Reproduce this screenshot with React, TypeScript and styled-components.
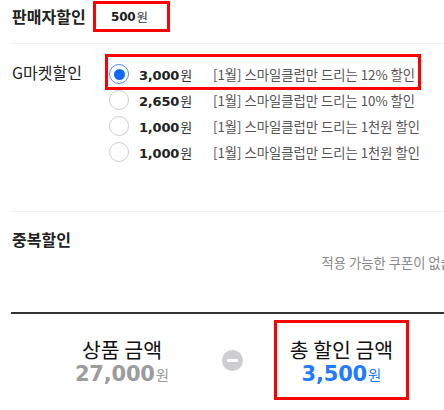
import React from "react";
import styled, { createGlobalStyle } from "styled-components";

const Global = createGlobalStyle`
  html, body { margin: 0; padding: 0; background: #fff; overflow: hidden; }
  body { width: 444px; height: 410px; }
`;

const KR = `"Noto Sans CJK KR", "Noto Sans", sans-serif`;
const NUM = `"DejaVu Sans", "Noto Sans CJK KR", sans-serif`;

const Page = styled.div`
  margin-left: 11px;
  width: 470px;
  font-family: ${KR};
  color: #222;
`;

const Section = styled.section<{ $pt: number; $h: number; $line?: boolean }>`
  height: ${(p) => p.$h}px;
  box-sizing: border-box;
  padding-top: ${(p) => p.$pt}px;
  border-bottom: ${(p) => (p.$line ? "1px solid #ececec" : "none")};
`;

const SellerRow = styled.div`
  height: 44px;
  box-sizing: border-box;
  padding-top: 1px;
  display: flex;
  align-items: flex-start;
  border-bottom: 1px solid #ececec;
`;

const Label = styled.div<{ $w: number; $lh: number; $bold?: boolean }>`
  width: ${(p) => p.$w}px;
  flex: none;
  padding-left: 1px;
  box-sizing: border-box;
  font-size: 16px;
  line-height: ${(p) => p.$lh}px;
  font-weight: ${(p) => (p.$bold ? 700 : 400)};
  color: #222;
  white-space: nowrap;
`;

const SellerValue = styled.div`
  width: 77px;
  height: 31px;
  box-sizing: border-box;
  border: 3px solid #f00;
  padding-left: 15px;
  display: flex;
  align-items: center;
`;

const Amount = styled.span<{ $size: number; $color: string }>`
  font-family: ${NUM};
  font-weight: 700;
  font-size: ${(p) => p.$size}px;
  color: ${(p) => p.$color};
  letter-spacing: -0.2px;
`;

const Won = styled.span<{ $size: number; $color: string }>`
  font-family: ${KR};
  font-weight: 400;
  font-size: ${(p) => p.$size}px;
  color: ${(p) => p.$color};
  margin-left: 1px;
`;

const GmarketBody = styled.div`
  display: flex;
  align-items: flex-start;
`;

const OptionList = styled.div`
  display: flex;
  flex-direction: column;
  margin-left: 3px;
`;

const OptionRow = styled.label<{ $hl?: boolean }>`
  position: relative;
  height: 26px;
  display: flex;
  align-items: center;
  cursor: pointer;
  ${(p) =>
    p.$hl
      ? `&::after {
    content: "";
    position: absolute;
    left: -4px;
    top: -7px;
    bottom: -3px;
    width: 316px;
    box-sizing: border-box;
    border: 3px solid #f00;
    pointer-events: none;
  }`
      : ""}
`;

const Radio = styled.span<{ $on?: boolean }>`
  width: 20px;
  height: 20px;
  box-sizing: border-box;
  border-radius: 50%;
  border: 1px solid ${(p) => (p.$on ? "#4b8ef7" : "#cfcfcf")};
  background: #fff;
  display: flex;
  align-items: center;
  justify-content: center;
  flex: none;
  &::before {
    content: "";
    width: 11px;
    height: 11px;
    border-radius: 50%;
    background: ${(p) => (p.$on ? "#1368f5" : "transparent")};
  }
`;

const OptionAmount = styled.div`
  width: 74px;
  margin-left: 10px;
  flex: none;
  display: flex;
  align-items: baseline;
  white-space: nowrap;
`;

const OptionDesc = styled.div`
  font-size: 13.3px;
  color: #555;
  white-space: nowrap;
`;

const Message = styled.div`
  margin-top: 6px;
  text-align: right;
  font-size: 13.3px;
  line-height: 16px;
  color: #888;
  white-space: nowrap;
  padding-right: 0;
`;

const Summary = styled.div`
  border-top: 2px solid #333;
  padding-top: 6px;
  display: flex;
  align-items: center;
`;

const SumBlock = styled.div<{ $w: number; $ml: number; $framed?: boolean }>`
  width: ${(p) => p.$w}px;
  margin-left: ${(p) => p.$ml}px;
  height: 80px;
  box-sizing: border-box;
  border: 3px solid ${(p) => (p.$framed ? "#f00" : "transparent")};
  padding-top: 14px;
  display: flex;
  flex-direction: column;
  align-items: center;
  flex: none;
`;

const SumTitle = styled.div`
  font-size: 20.5px;
  line-height: 24px;
  color: #111;
  white-space: nowrap;
`;

const SumValue = styled.div`
  line-height: 27px;
  display: flex;
  align-items: baseline;
  white-space: nowrap;
`;

const MinusIcon = styled.div`
  width: 21px;
  height: 21px;
  margin-left: 15px;
  border-radius: 50%;
  background: #cdcdd2;
  display: flex;
  align-items: center;
  justify-content: center;
  flex: none;
  &::before {
    content: "";
    width: 11px;
    height: 3px;
    border-radius: 1px;
    background: #fff;
  }
`;

const options = [
  { amt: "3,000", desc: "[1월] 스마일클럽만 드리는 12% 할인", on: true },
  { amt: "2,650", desc: "[1월] 스마일클럽만 드리는 10% 할인" },
  { amt: "1,000", desc: "[1월] 스마일클럽만 드리는 1천원 할인" },
  { amt: "1,000", desc: "[1월] 스마일클럽만 드리는 1천원 할인" },
];

export default function App() {
  return (
    <Page>
      <Global />
      <SellerRow>
        <Label $w={82} $lh={31} $bold>
          판매자할인
        </Label>
        <SellerValue>
          <Amount $size={12} $color="#222">500</Amount>
          <Won $size={12.5} $color="#333">원</Won>
        </SellerValue>
      </SellerRow>

      <Section $pt={17} $h={168} $line>
        <GmarketBody>
          <Label $w={95} $lh={22}>
            G마켓할인
          </Label>
          <OptionList>
            {options.map((o, i) => (
              <OptionRow key={i} $hl={o.on}>
                <Radio $on={o.on} />
                <OptionAmount>
                  <Amount $size={13} $color="#222">{o.amt}</Amount>
                  <Won $size={13} $color="#333">원</Won>
                </OptionAmount>
                <OptionDesc>{o.desc}</OptionDesc>
              </OptionRow>
            ))}
          </OptionList>
        </GmarketBody>
      </Section>

      <Section $pt={17} $h={100}>
        <Label $w={95} $lh={20} $bold>
          중복할인
        </Label>
        <Message>적용 가능한 쿠폰이 없습니다.</Message>
      </Section>

      <Summary>
        <SumBlock $w={170} $ml={26}>
          <SumTitle>상품 금액</SumTitle>
          <SumValue>
            <Amount $size={21} $color="#9c9c9c">27,000</Amount>
            <Won $size={14.5} $color="#9c9c9c">원</Won>
          </SumValue>
        </SumBlock>
        <MinusIcon />
        <SumBlock $w={135} $ml={31} $framed>
          <SumTitle>총 할인 금액</SumTitle>
          <SumValue>
            <Amount $size={21} $color="#1f7bff">3,500</Amount>
            <Won $size={14.5} $color="#1f7bff">원</Won>
          </SumValue>
        </SumBlock>
      </Summary>
    </Page>
  );
}
